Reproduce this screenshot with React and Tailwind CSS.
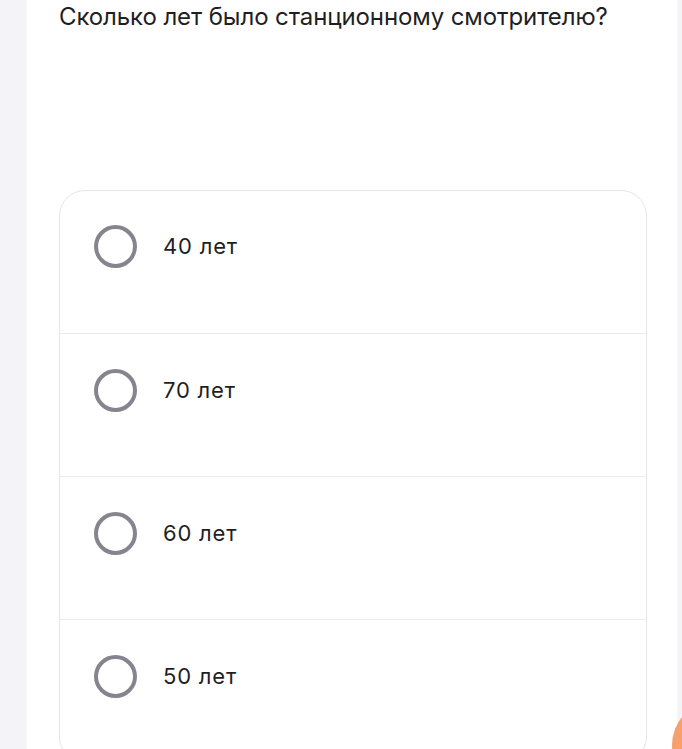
import React from 'react';

const options = ['40 лет', '70 лет', '60 лет', '50 лет'];

function Radio() {
  return (
    <span className="block w-[43px] h-[43px] rounded-full border-[4px] border-[#86848f] shrink-0" />
  );
}

export default function App() {
  return (
    <div className="h-[749px] overflow-hidden bg-[#f3f3f8] flex relative" style={{ fontFamily: 'Inter, "Noto Sans", sans-serif' }}>
      <div className="ml-[27px] w-[650px] bg-white px-[32px] text-[#1f1f23]">
        <h1 className="text-[24px] leading-[32px] pt-[1px] font-normal tracking-[-0.1px]">
          Сколько лет было станционному смотрителю?
        </h1>
        <div className="mt-[157px] w-[588px] border border-[#e6e6ea] rounded-[26px] overflow-hidden">
          {options.map((opt, i) => (
            <div
              key={opt}
              className={`flex items-start pl-[34px] gap-[26px] ${i > 0 ? 'h-[143px] pt-[35px] border-t border-[#ececef]' : 'h-[142px] pt-[34px]'}`}
            >
              <Radio />
              <span className="text-[22px] leading-[43px] tracking-[0.8px]">{opt}</span>
            </div>
          ))}
        </div>
      </div>
      <div className="absolute left-[672px] top-[701px] w-[88px] h-[88px] rounded-full bg-[#f6a06b]" />
    </div>
  );
}
